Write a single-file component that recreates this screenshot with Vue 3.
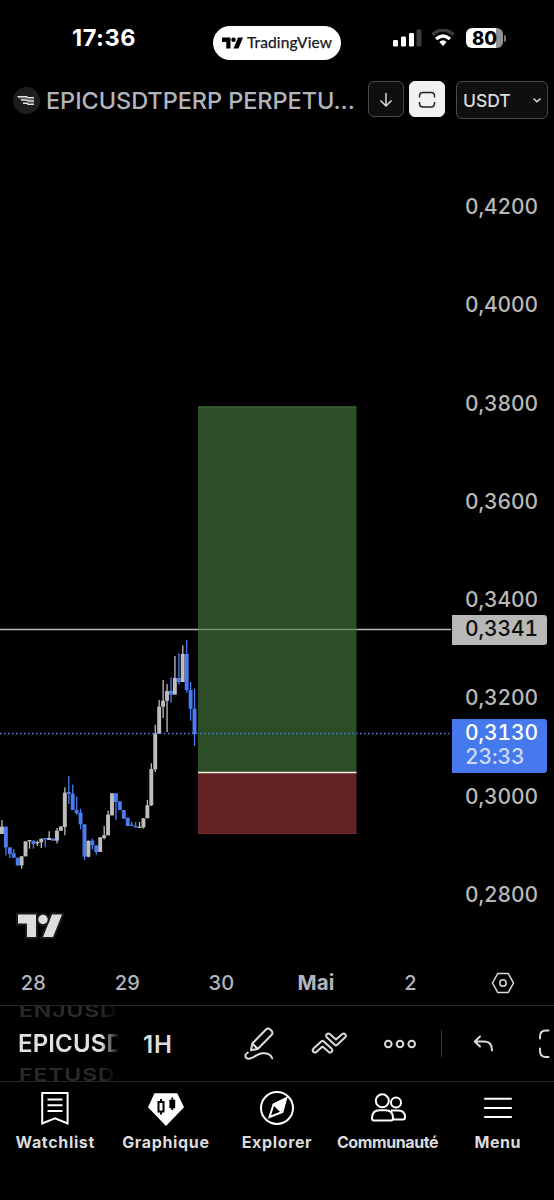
<script setup>
const prices = ['0,4200', '0,4000', '0,3800', '0,3600', '0,3400', '0,3200', '0,3000', '0,2800']

// [rising, high, low, body top, body bottom], in thirds of a pixel below y = 630
const series = [
  [1, 570, 612, 590, 612], [0, 590, 676, 590, 652], [0, 652, 684, 652, 672], [0, 657, 684, 670, 683],
  [0, 683, 708, 683, 706], [1, 678, 716, 679, 706], [1, 634, 679, 634, 679], [1, 630, 656, 630, 634],
  [0, 632, 656, 632, 642], [1, 632, 648, 636, 640], [1, 626, 654, 626, 637], [0, 624, 652, 624, 628],
  [1, 604, 630, 624, 630], [0, 624, 632, 626, 632], [1, 594, 640, 602, 632], [1, 588, 603, 590, 602],
  [1, 472, 616, 488, 591], [0, 438, 522, 486, 491], [0, 464, 540, 491, 540], [0, 500, 554, 540, 550],
  [0, 536, 598, 548, 583], [0, 583, 690, 583, 680], [1, 632, 682, 632, 680], [0, 626, 658, 632, 646],
  [0, 646, 674, 646, 666], [1, 622, 666, 622, 666], [1, 588, 628, 616, 624], [1, 542, 616, 554, 616],
  [1, 490, 556, 490, 556], [0, 490, 570, 490, 516], [0, 514, 540, 514, 540], [0, 540, 566, 540, 566],
  [0, 563, 588, 563, 588], [0, 576, 588, 584, 588], [0, 576, 592, 588, 592], [1, 576, 594, 590, 593],
  [1, 564, 596, 565, 592], [1, 510, 566, 526, 564], [1, 400, 528, 417, 526], [1, 284, 426, 311, 418],
  [1, 210, 312, 230, 311], [1, 150, 264, 212, 230], [1, 162, 306, 183, 212], [0, 142, 218, 182, 194],
  [1, 78, 194, 144, 194], [0, 70, 164, 144, 156], [1, 46, 156, 72, 156], [0, 30, 188, 72, 180],
  [0, 156, 272, 180, 236], [0, 176, 348, 236, 312],
]
const candles = series.map(([up, high, low, top, bottom], i) => ({
  x: 2 + i * 3.93,
  fill: up ? '#bdbdbd' : '#4a7bef',
  high: 630 + high / 3,
  range: (low - high) / 3,
  top: 630 + top / 3,
  body: Math.max(1.3, (bottom - top) / 3),
}))
</script>

<template>
  <main class="screen">
    <header class="status">
      <span class="clock">17:36</span>
      <div class="pill">
        <svg width="21" height="12" viewBox="0 0 42 22"><path d="M0 0h17v22H8.500V9H0zM32 0h10l-9 22H23z" /><circle cx="23" cy="4.500" r="4.500" /></svg>
        <span>TradingView</span>
      </div>
      <div class="system">
        <svg class="signal" width="29" height="18" viewBox="0 0 29 18">
          <rect x="0" y="11" width="5" height="6.500" rx="1.300" fill="#fff" /><rect x="8" y="7.500" width="5" height="10" rx="1.300" fill="#fff" />
          <rect x="16" y="4" width="5" height="13.500" rx="1.300" fill="#fff" /><rect x="23.500" y="0.500" width="5" height="17" rx="1.300" fill="#3b3b3b" />
        </svg>
        <svg class="wifi" width="24" height="18" viewBox="0 0 24 18" fill="none">
          <path d="M1.300 5.800Q12-3.800 22.700 5.800" stroke="#3b3b3b" stroke-width="3.400" />
          <path d="M5 10Q12 3.900 19 10" stroke="#fff" stroke-width="3.400" />
          <path d="M8.300 13Q12 9.700 15.700 13L12 17z" fill="#fff" />
        </svg>
        <div class="battery"><span>80</span></div><i class="cap"></i>
      </div>
    </header>

    <section class="heading">
      <svg class="coin" width="27" height="27" viewBox="0 0 27 27">
        <circle cx="13.500" cy="13.500" r="13.500" fill="#1d1d20" />
        <path d="M4.500 9.800h9l1.500 1h6M8 13h5.500l1.500 1h6M10 16.300h4l1 1h6" fill="none" stroke="#e8e8e8" stroke-width="1.500" />
        <path d="M6 11.500h7l2 1h6M15 15.600h6" fill="none" stroke="#888" stroke-width=".6" />
      </svg>
      <h1>EPICUSDTPERP PERPETU...</h1>
      <button class="tool"><svg width="34" height="34" viewBox="0 0 34 34"><path d="M17 11v13M11.500 18.500l5.500 5.500 5.500-5.500" /></svg></button>
      <button class="tool light"><svg width="34" height="34" viewBox="0 0 34 34"><path d="M9.500 15.500v-1.500q0-3.500 3.500-3.500h8q3.500 0 3.500 3.500V15.500M9.500 20V21.500q0 3.500 3.500 3.500h8q3.500 0 3.500-3.500v-1.500" /></svg></button>
      <button class="currency"><span>USDT</span><svg width="10" height="7" viewBox="0 0 10 7"><path d="M1.500 1.500L5 4.800l3.500-3.300" /></svg></button>
    </section>

    <section class="chart">
      <svg class="plot" width="452" height="830" viewBox="0 130 452 830">
        <path d="M0 629.500h451" stroke="#b8b8b8" stroke-width="1.600" />
        <g v-for="c in candles" :key="c.x" :fill="c.fill">
          <rect :x="c.x - 0.65" :y="c.high" width="1.300" :height="c.range" />
          <rect :x="c.x - 2" :y="c.top" width="3.900" :height="c.body" />
        </g>
        <rect x="198" y="406.500" width="158.500" height="366" fill="#2d4d27" />
        <rect x="198" y="772.500" width="158.500" height="61.500" fill="#632224" />
        <path d="M198 407h158.500" stroke="#3f7136" />
        <path d="M198 833.500h158.500" stroke="#7c2829" />
        <path d="M198 629.500h158.500" stroke="#71966c" stroke-width="1.600" />
        <path d="M198 772.500h158.500" stroke="#f3efe9" stroke-width="1.600" />
        <path d="M0 733.500h452" stroke="#4f81d8" stroke-width="1.400" stroke-dasharray="1.500 2.500" />
        <g fill="#dedede" stroke="#1b1b1b" stroke-width="4" paint-order="stroke">
          <path d="M18 914.500h18V937h-9v-13.500h-9zM52 914.500h10L53 937H43z" /><circle cx="43" cy="919.500" r="4.700" />
        </g>
      </svg>
      <div class="axis">
        <span v-for="p in prices" :key="p" class="price">{{ p }}</span>
        <div class="tag level">0,3341</div>
        <div class="tag last">0,3130<span>23:33</span></div>
      </div>
    </section>

    <section class="dates">
      <span>28</span><span>29</span><span>30</span><b>Mai</b><span>2</span>
      <svg width="24" height="22" viewBox="0 0 24 22"><path d="M6.800 1.500h10.400L22.500 11l-5.300 9.500H6.800L1.500 11z" /><circle cx="12" cy="11" r="3.200" /></svg>
    </section>

    <section class="toolbar">
      <div class="wheel">
        <span class="faded">ENJUSD</span><strong>EPICUSD</strong><span class="faded">FETUSD</span>
      </div>
      <span class="interval">1H</span>
      <svg class="glyph draw" width="32" height="36" viewBox="0 0 32 36">
        <path d="M8.300 17.500L22 3.500q2.200-2 4.300 0l1.200 1.200q2 2.200 0 4.300L13.700 23l-6.700 1.300zM8.300 17.500l5.400 5.500M3.800 26.500C-.5 29.500 1.500 33.500 6 32.500c4.500-1 7.500-5 12-5.300 4.500-.3 9 1.300 10.200 5" />
      </svg>
      <svg class="glyph pattern" width="36" height="24" viewBox="0 0 36 24">
        <path d="M2.300 16.800l8.200-7.600q1-.9 2 0l8.200 7.600q1.300 1.500.1 2.900t-3 .4l-6.300-5.500L5.300 20.100q-1.700 1-3-.4t0-2.900z" />
        <path d="M15.700 5.200L24 13q1 .9 2 0l8.200-7.800q1.300-1.500.1-2.900t-3-.4L25 7.400l-6.200-5.500q-1.700-1-3 .4t-.1 2.900z" />
      </svg>
      <svg class="glyph more" width="34" height="12" viewBox="0 0 34 12"><circle cx="5.300" cy="6" r="3.300" /><circle cx="17" cy="6" r="3.300" /><circle cx="28.700" cy="6" r="3.300" /></svg>
      <i class="rule"></i>
      <svg class="glyph undo" width="22" height="18" viewBox="0 0 22 18"><path d="M7 1.500L1.800 6.500 7 11.500M2 6.500h9.500q7.500 0 7.500 9" /></svg>
      <svg class="glyph full" width="14" height="32" viewBox="0 0 14 32"><path d="M2 10.500V8.500q0-6 6-6h2.500M2 20.500v2.500q0 6 6 6h2.500" /></svg>
    </section>

    <nav class="tabs">
      <a class="tab"><svg viewBox="0 0 38 38"><path d="M6.200 4h25.400v30.500L19 29.300 6.200 34.500zM11.500 10.500h15M11.500 16.300h15M11.500 22h15" /></svg><span class="t1">Watchlist</span></a>
      <a class="tab"><svg viewBox="0 0 38 38"><path d="M7.500 4.200h22.800l6.700 14L19 37 1 18.200z" fill="#fff" stroke="none" /><path d="M11.500 13h5v9.500h-5zM14 10v3M14 22.500v3" stroke="#000" stroke-width="2" /><path d="M23.300 11.700h4v6.600h-4zM25.300 8.500v12.500" fill="#000" stroke="#000" stroke-width="1.800" /></svg><span class="t2">Graphique</span></a>
      <a class="tab"><svg class="shifted" viewBox="0 0 38 38"><circle cx="19" cy="19" r="16" /><path d="M28 9.500L24.500 23 11.500 28 15.500 15.500z" /><path d="M28 9.500L22.500 22l-6.500-6.500z" fill="#fff" /></svg><span class="t3">Explorer</span></a>
      <a class="tab"><svg class="shifted" viewBox="0 0 38 38"><circle cx="13.300" cy="11.800" r="6.500" /><circle cx="27" cy="13.500" r="5" /><path d="M3 29q0-7.800 7.500-7.800h6q7.500 0 7.500 7.800 0 2.500-2 2.500H5q-2 0-2-2.500zM22 21.500h7q7 0 7 6.500 0 2.500-2 2.500H24" /></svg><span class="t4">Communauté</span></a>
      <a class="tab"><svg viewBox="0 0 38 38"><path d="M5.200 9.800h27.600M5.200 18.900h27.600M5.200 28h27.600" /></svg><span class="t5">Menu</span></a>
    </nav>
  </main>
</template>

<style>
body { background: #000; }
</style>

<style scoped>
* { box-sizing: border-box; }
.screen { width: 554px; height: 1200px; overflow: hidden; display: flex; flex-direction: column; background: #000; color: #dbdbdb; font-family: Inter, "Liberation Sans", sans-serif; }
svg { display: block; flex: none; }
.status { height: 70px; flex: none; display: flex; align-items: flex-start; }
.clock { width: 141px; margin-left: 72px; padding-top: 24px; font-size: 23.500px; line-height: 28px; font-weight: 700; color: #fff; letter-spacing: .55px; }
.pill { width: 128px; height: 34px; margin-top: 25.500px; padding-left: 9px; border-radius: 17px; background: #fff; color: #131722; display: flex; align-items: center; gap: 5px; font: 400 15.500px Lato, sans-serif; letter-spacing: .12px; white-space: nowrap; }
.pill span { margin: -1px 0 0 -1px; -webkit-text-stroke: .25px #131722; }
.system { display: flex; align-items: center; height: 20px; margin: 28px 0 0 52px; }
.wifi { margin-left: 9px; }
.battery { width: 37px; height: 20px; margin-left: 11px; border-radius: 6px; background: linear-gradient(90deg, #fff 30px, #929292 30px); color: #000; font-size: 18.500px; line-height: 20px; font-weight: 800; padding-left: 6px; }
.cap { width: 2px; height: 7px; margin-left: 1px; border-radius: 0 2px 2px 0; background: #777; }
.heading { height: 60px; flex: none; display: flex; align-items: flex-start; padding: 11px 6px 0 13px; }
.coin { margin-top: 6px; }
h1 { width: 315px; margin: 3px 0 0 6px; padding: 0; font-size: 23.500px; line-height: 34px; font-weight: 500; color: #b2b5be; white-space: nowrap; letter-spacing: -.05px; }
button { margin: 0; padding: 0; font-family: inherit; }
.tool { width: 36px; height: 36px; margin-left: 7px; flex: none; background: #0f0f0f; border: 1.500px solid #4a4a4a; border-radius: 6px; display: flex; align-items: center; justify-content: center; }
.tool svg, .currency svg { fill: none; stroke: #dbdbdb; stroke-width: 1.500; }
.tool.light { margin-left: 5px; background: #f2f2f2; border-color: #f2f2f2; }
.tool.light svg { stroke: #222; }
.currency { width: 92px; height: 38px; margin-left: 11px; flex: none; padding: 0 5px 0 6px; display: flex; align-items: center; justify-content: space-between; background: #0f0f0f; border: 1.500px solid #4a4a4a; border-radius: 6px; color: #dbdbdb; font-size: 17.500px; font-weight: 500; }
.chart { height: 830px; flex: none; display: flex; }
.axis { position: relative; width: 102px; padding: 28px 0 0 13px; display: flex; flex-direction: column; font-size: 21px; font-weight: 500; letter-spacing: -.1px; font-variant-numeric: tabular-nums; color: #b8b8b8; }
.price { height: 98.300px; line-height: 98.300px; flex: none; }
.tag { position: absolute; left: 0; width: 95px; padding-left: 13px; border-radius: 0 3px 3px 0; line-height: 28px; }
.level { top: 485px; height: 30px; background: #b8b8b8; color: #0f0f0f; }
.last { top: 589px; height: 54px; padding-top: 1px; line-height: 25px; background: #4579ed; color: #fff; }
.last span { display: block; line-height: 23px; color: #ccdafb; font-weight: 500; }
.dates { height: 45px; flex: none; display: grid; grid-template-columns: 94px 94px 94px 95px 94px 83px; margin-left: -13.500px; width: 554px; align-items: center; justify-items: center; color: #b2b5be; font-size: 20px; font-weight: 500; letter-spacing: .2px; }
.dates b { font-weight: 700; font-size: 20.500px; }
.dates svg { margin-left: 8px; fill: none; stroke: #dbdbdb; stroke-width: 1.500; }
.toolbar { height: 77px; flex: none; display: flex; align-items: center; border-top: 1.500px solid #272727; border-bottom: 1.500px solid #272727; overflow: hidden; }
.wheel { width: 101px; margin-left: 18px; height: 76px; overflow: hidden; display: flex; flex-direction: column; justify-content: center; font-size: 24px; -webkit-mask-image: linear-gradient(90deg, #000 82%, transparent 100%); mask-image: linear-gradient(90deg, #000 82%, transparent 100%); }
.wheel strong { font-weight: 600; line-height: 38px; color: #e1e1e1; letter-spacing: .15px; padding-top: 1px; }
.wheel .faded { font-size: 23px; line-height: 25px; height: 25px; color: #2b2b2b; font-weight: 600; transform: scaleY(.74); letter-spacing: .9px; padding-left: 1px; }
.interval { width: 40px; margin-left: 24px; padding-top: 1px; font-size: 24px; font-weight: 600; color: #dedede; letter-spacing: .8px; }
.glyph { fill: none; stroke: #dbdbdb; stroke-width: 2; stroke-linecap: round; stroke-linejoin: round; }
.draw { margin-left: 61px; }
.pattern { margin-left: 35px; }
.more { margin-left: 36px; }
.rule { width: 1px; height: 27px; margin-left: 24px; flex: none; background: #353535; }
.undo { margin-left: 31px; }
.full { margin-left: 43px; }
.tabs { flex: 1; display: grid; grid-template-columns: repeat(5, 110.600px); padding-top: 7px; }
.tab { display: flex; flex-direction: column; align-items: center; font-size: 16px; line-height: 20px; font-weight: 700; color: #dbdbdb; }
.tab svg { width: 38px; height: 38px; fill: none; stroke: #fff; stroke-width: 2; }
.tab .shifted { margin-left: 2px; }
.tab span { margin-top: 5px; letter-spacing: .65px; }
.tab .t3 { margin-left: 1px; }
.tab .t4 { letter-spacing: -.4px; margin-left: 1px; }
.tab .t5 { letter-spacing: .5px; }
</style>
